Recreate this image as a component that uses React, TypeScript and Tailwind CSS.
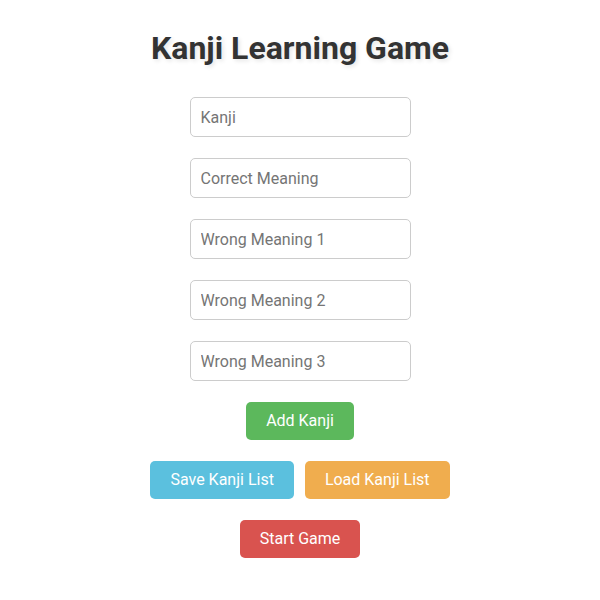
import React, { useState } from 'react'

const fields = ['Kanji', 'Correct Meaning', 'Wrong Meaning 1', 'Wrong Meaning 2', 'Wrong Meaning 3']

export default function App() {
  const [values, setValues] = useState<string[]>(fields.map(() => ''))

  return (
    <div className="min-h-screen bg-white flex flex-col items-center pt-[29px] font-['Roboto',sans-serif]">
      <h1 className="text-[32px] leading-[38px] font-bold text-[#333] [text-shadow:2px_2px_4px_rgba(0,0,0,0.1)]">
        Kanji Learning Game
      </h1>

      <div className="mt-[30px] flex flex-col items-center gap-[21px]">
        {fields.map((f, i) => (
          <input
            key={f}
            type="text"
            placeholder={f}
            value={values[i]}
            onChange={(e) => {
              const next = [...values]
              next[i] = e.target.value
              setValues(next)
            }}
            className="w-[221px] h-[40px] px-[10px] text-[16px] text-[#333] placeholder:text-[#757575] border border-[#ccc] rounded-[5px] outline-none"
          />
        ))}

        <button className="h-[38px] px-[20px] bg-[#5cb85c] text-white text-[16px] rounded-[5px]">
          Add Kanji
        </button>

        <div className="flex gap-[11px]">
          <button className="h-[38px] px-[20px] bg-[#5bc0de] text-white text-[16px] rounded-[5px]">
            Save Kanji List
          </button>
          <button className="h-[38px] px-[20px] bg-[#f0ad4e] text-white text-[16px] rounded-[5px]">
            Load Kanji List
          </button>
        </div>

        <button className="h-[38px] px-[20px] bg-[#d9534f] text-white text-[16px] rounded-[5px]">
          Start Game
        </button>
      </div>
    </div>
  )
}
